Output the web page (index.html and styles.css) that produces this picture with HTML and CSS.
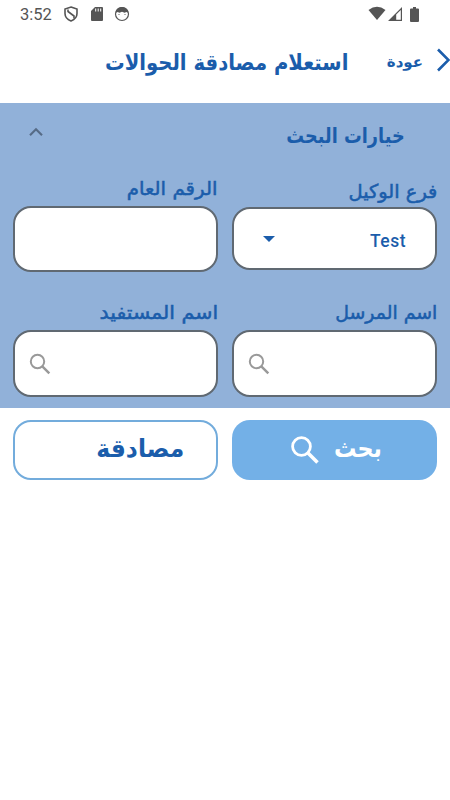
FILE: index.html
```html
<!DOCTYPE html>
<html lang="ar" dir="rtl">
<head>
<meta charset="utf-8">
<title>استعلام مصادقة الحوالات</title>
<link rel="stylesheet" href="styles.css">
</head>
<body>
<div class="status" dir="ltr">
  <span class="clock">3:52</span>
  <svg class="shield" width="14" height="16" viewBox="0 0 14 16" fill="none" stroke="#555" stroke-width="1.600"><path d="M7 1 13 3v4.500c0 3.500-2.400 6-6 7.500-3.600-1.500-6-4-6-7.500V3z"/><path d="M4 3.500v2L10 10v2.500"/></svg>
  <svg class="card" width="12" height="14" viewBox="0 0 12 14"><path fill="#555" d="M4 0h7q1 0 1 1v12q0 1-1 1H1q-1 0-1-1V4z"/><path stroke="#fff" d="M4.700 1.500v3M7.200 1.500v3M9.700 1.500v3"/></svg>
  <svg class="face" width="16" height="16" viewBox="0 0 16 16"><circle cx="8" cy="8" r="6.500" fill="#fff" stroke="#555" stroke-width="1.200"/><path fill="#555" d="M1.500 7C2 3 5 1 8 1s6 2 6.500 6l-2-1-2 .7L8 5.800l-2.500.9-2-.7z"/><path stroke="#666" d="M5 8v1M11 8v1"/></svg>
  <svg class="wifi" width="18" height="15" viewBox="0 0 18 15"><path fill="#555" d="M.5 4Q9-2.500 17.500 4L9 14z"/></svg>
  <svg class="signal" width="14" height="14" viewBox="0 0 14 14"><path fill="#555" fill-rule="evenodd" d="M14 0v14H0zM12.800 3 8.200 7.600v5.200h4.600z"/></svg>
  <svg class="battery" width="9" height="15" viewBox="0 0 9 15"><path fill="#555" d="M3 0h3v1.500h2q1 0 1 1V14q0 1-1 1H1q-1 0-1-1V2.500q0-1 1-1h2z"/></svg>
</div>
<header class="bar">
  <svg class="back" width="13" height="24" viewBox="0 0 13 24" fill="none" stroke="#1b5dab" stroke-width="2.600"><path d="M1 1.500 11.500 12 1 22.500"/></svg>
  <span class="back-label"><span class="fit f-back">عودة</span></span>
  <h1><span class="fit f-title">استعلام مصادقة الحوالات</span></h1>
</header>
<main>
  <section class="panel">
    <div class="panel-head">
      <h2><span class="fit f-head">خيارات البحث</span></h2>
      <svg width="14" height="10" viewBox="0 0 14 10" fill="none" stroke="#566b86" stroke-width="2.100"><path d="M1 8.300 7 2.200l6 6.100"/></svg>
    </div>
    <div class="grid">
      <div class="cell branch">
        <label><span class="fit f-branch">فرع الوكيل</span></label>
        <div class="field select"><span class="value">Test</span><svg width="12" height="6" viewBox="0 0 12 6"><path fill="#1b5dab" d="M0 0h12L6 6z"/></svg></div>
      </div>
      <div class="cell number">
        <label><span class="fit f-number">الرقم العام</span></label>
        <div class="field"></div>
      </div>
      <div class="cell">
        <label><span class="fit f-sender">اسم المرسل</span></label>
        <div class="field search"><svg width="22" height="22" viewBox="0 0 22 22" fill="none" stroke="#999" stroke-width="2"><circle cx="8.500" cy="8.500" r="6.700"/><path d="M13.300 13.300 20.300 20.300" stroke-width="2.500"/></svg></div>
      </div>
      <div class="cell">
        <label><span class="fit f-payee">اسم المستفيد</span></label>
        <div class="field search"><svg width="22" height="22" viewBox="0 0 22 22" fill="none" stroke="#999" stroke-width="2"><circle cx="8.500" cy="8.500" r="6.700"/><path d="M13.300 13.300 20.300 20.300" stroke-width="2.500"/></svg></div>
      </div>
    </div>
  </section>
  <div class="actions">
    <button class="primary"><span class="fit f-search">بحث</span><svg width="28" height="28" viewBox="0 0 28 28" fill="none" stroke="#fff" stroke-width="2.800"><circle cx="10.500" cy="10.500" r="8.900"/><path d="M17 17 26.500 26.500" stroke-width="3.600"/></svg></button>
    <button class="outline"><span class="fit f-approve">مصادقة</span></button>
  </div>
</main>
</body>
</html>
```
FILE: styles.css
```css
* { box-sizing: border-box; }
body { margin: 0; width: 450px; height: 800px; overflow: hidden; background: #fff; color: #1b5dab; font-family: "DejaVu Sans", sans-serif; }
svg { display: block; flex: none; }
.status { display: flex; align-items: center; height: 28px; padding-left: 20px; }
.clock { width: 44px; padding-top: 1px; font: 400 16.500px/28px Roboto, sans-serif; color: #555; }
.card { margin-left: 13px; }
.face { margin-left: 11px; }
.wifi { margin-left: 238px; }
.signal { margin-left: 2px; }
.battery { margin-left: 8px; }
.wifi { margin-bottom: 1px; }
.bar { display: flex; align-items: center; height: 75px; padding-bottom: 9px; border-bottom: 1px solid #fff; }
.back { margin-left: 14px; margin-bottom: 2px; }
.fit { display: inline-block; white-space: nowrap; transform-origin: right center; }
.back-label { width: 35px; padding-top: 3px; font-size: 15px; font-weight: 700; line-height: 24px; }
h1, h2 { margin: 0; font-weight: 700; white-space: nowrap; }
h1 { width: 243px; margin-right: 40px; padding-top: 5px; font-size: 21px; line-height: 32px; }
.f-title { transform: scale(.935, 1.050); }
.panel { height: 305px; background: #91b1d9; }
.panel-head { display: flex; justify-content: space-between; height: 72px; padding: 16px 45px 0 29px; }
.panel-head svg { margin-top: 8px; }
h2 { width: 118px; padding-top: 1px; font-size: 20px; line-height: 32px; }
.f-head { transform: scale(.885, 1.050); }
.grid { display: grid; grid-template-columns: 205px 205px; column-gap: 14px; grid-template-rows: 124px 98px; padding: 0 13px; }
.cell { display: flex; flex-direction: column; min-width: 0; }
label { height: 31px; flex: none; font-size: 18px; font-weight: 400; line-height: 28px; -webkit-text-stroke: .500px #1b5dab; }
.f-branch { transform: scale(1.080, 1.060); }
.f-number { transform: scale(1.100, 1.060); }
.f-sender { transform: scale(1.050, 1.060); }
.f-payee { transform: scale(1.140, 1.060); }
.field { display: flex; align-items: center; height: 67px; background: #fff; border: 2px solid #606972; border-radius: 18px; }
.branch { padding-top: 3px; }
.branch label { height: 29px; }
.branch .field { height: 63px; }
.number .field { height: 66px; }
.select { justify-content: space-between; padding: 4px 29px 0; }
.select svg { margin-bottom: 4px; }
.value { font: 500 17.500px/24px Roboto, sans-serif; letter-spacing: .500px; }
.search { justify-content: flex-end; padding-left: 14px; }
.actions { display: grid; grid-template-columns: 205px 205px; column-gap: 14px; padding: 12px 13px; }
button { display: flex; align-items: center; height: 60px; margin: 0; border: 0; border-radius: 18px; font: 700 23px/36px "DejaVu Sans", sans-serif; padding: 0; }
.primary { background: #73b0e7; color: #fff; padding-right: 55px; }
.primary svg { margin-bottom: 1px; }
.primary .fit { width: 47px; margin: 0 0 4px 16px; }
.f-search { transform: scale(.970, 1.080); }
.outline { background: #fff; border: 2px solid #73acdc; color: #1b5dab; padding: 0 32px 5px 0; }
.f-approve { transform: scale(1.020, 1.080); }
```
